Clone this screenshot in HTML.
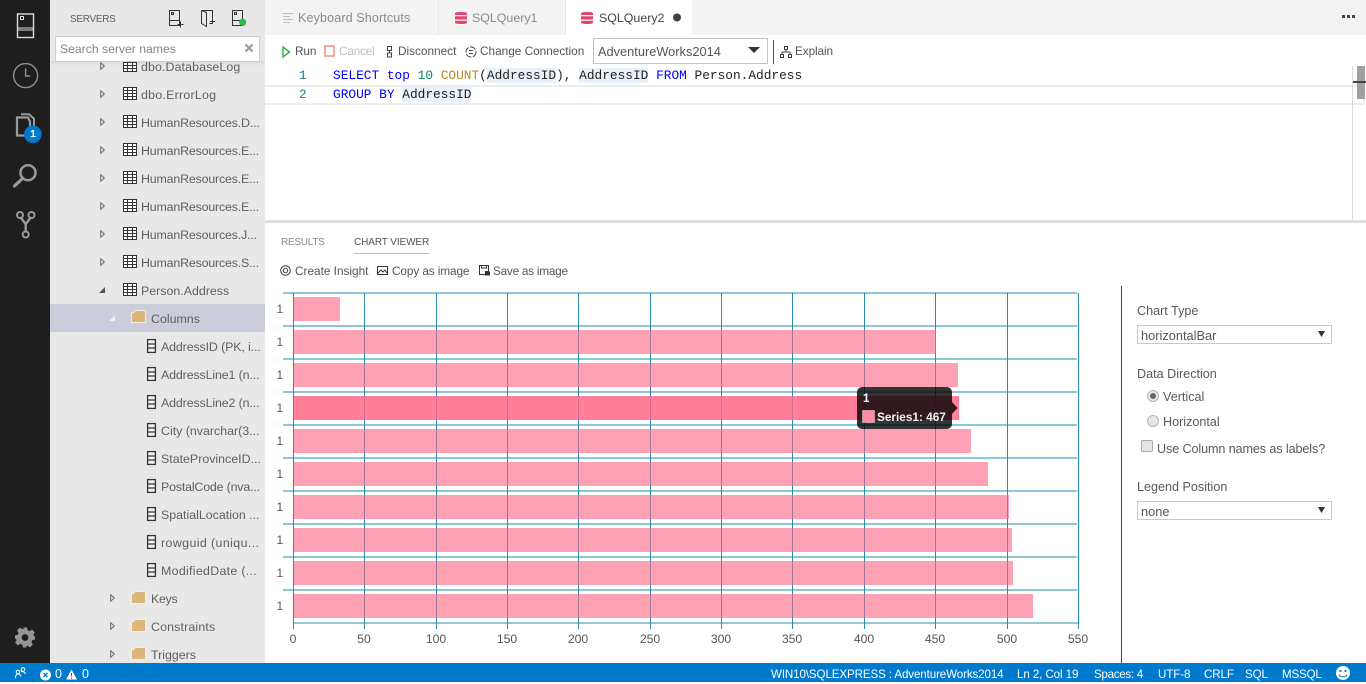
<!DOCTYPE html>
<html lang="en"><head><meta charset="utf-8"><title>SQL Operations Studio</title>
<style>
*{box-sizing:border-box}
html,body{margin:0;padding:0;width:1366px;height:682px;overflow:hidden;background:#fff;font-family:"Liberation Sans",sans-serif;font-size:12px;color:#616161}
.a{position:absolute;white-space:nowrap}
svg{position:absolute;overflow:visible}
#act{left:0;top:0;width:50px;height:663px;background:#1e1e1e}
#side{left:50px;top:0;width:215px;height:663px;background:#e8e8e8;overflow:hidden}
.row{position:absolute;left:0;width:215px;height:28px;line-height:28px;font-size:12.4px;color:#5f5f5f;white-space:nowrap}
.row span{position:absolute;top:1px}
.row svg{top:0;left:0}
.hr span{letter-spacing:-.17px}
#tabs{left:265px;top:0;width:1101px;height:35px;background:#f3f3f3}
.tb{position:absolute;top:1px;height:35px;line-height:35px;font-size:12.4px;white-space:nowrap}
.code{font-family:"Liberation Mono",monospace;font-size:12.82px;line-height:19px;height:19px;color:#222;white-space:pre}
.k{color:#0000ff}.hl{background:#e9f2fb}
.lb{font-size:12.6px;color:#5a5a5a}
.xt{position:absolute;top:632px;width:40px;text-align:center;font-size:12.2px;color:#555}
.yt{position:absolute;left:276.500px;font-size:12px;color:#555}
.sel{position:absolute;left:1137px;width:195px;height:19px;border:1px solid #c8c8c8;background:#fff;font-size:12.8px;line-height:19px;padding-left:3px;color:#555}
.st{position:absolute;top:665px;height:19px;line-height:19px;font-size:11.6px;color:#fff;white-space:nowrap}
.tool{position:absolute;top:38px;line-height:27px;font-size:11.8px;color:#555;white-space:nowrap}
.act{position:absolute;top:264px;line-height:14px;font-size:11.8px;color:#555;white-space:nowrap}
</style></head><body>

<svg width="0" height="0" style="position:absolute"><defs>
<symbol id="tbl" viewBox="0 0 14 13" overflow="visible"><rect x=".5" y=".5" width="13" height="12" fill="#fff" stroke="#333"/><path d="M0 3.500h14M0 6.500h14M0 9.500h14M4.500 1v12M9.500 1v12" stroke="#333" stroke-width="1" fill="none"/></symbol>
<symbol id="col" viewBox="0 0 9 14" overflow="visible"><rect x=".6" y=".6" width="7.800" height="12.800" fill="#f3f3f3" stroke="#333" stroke-width="1.300"/><path d="M1 5h7M1 9h7" stroke="#333" stroke-width="1.200" fill="none"/></symbol>
<symbol id="fold" viewBox="0 0 15 13" overflow="visible"><path d="M0 2.300h2.300L3.600 0H15v13H0z" fill="#f3efe6"/><path d="M1 3.200h1.800L4.100 1H14v11H1z" fill="#dcb67a"/></symbol>
<symbol id="arr" viewBox="0 0 5 8" overflow="visible"><path d="M.7 .7L4.300 4 .7 7.300z" fill="#e8e8e8" stroke="#6a6a6a" stroke-width="1"/></symbol>
<symbol id="db" viewBox="0 0 12 12" overflow="visible"><path d="M0 1.500C0 .4 2 0 6 0s6 .4 6 1.500v1.600H0zM0 4.300h12v3.200H0zM0 8.700h12v1.800C12 11.600 10 12 6 12s-6-.4-6-1.500z" fill="#e0476f"/></symbol>
</defs></svg>

<div id="act" class="a">
<svg width="50" height="663" style="left:0;top:0" fill="none">
<rect x="17.500" y="14" width="16" height="23.500" stroke="#dcdcdc" stroke-width="1.400"/>
<path d="M18 28h15M18 30h15" stroke="#dcdcdc" stroke-width="1"/>
<rect x="20.500" y="16.500" width="3" height="3" stroke="#dcdcdc"/>
<circle cx="25.600" cy="75.600" r="12" stroke="#8f8f8f" stroke-width="1.400"/>
<path d="M25.600 68.500v7.500h4.500" stroke="#8f8f8f" stroke-width="1.400"/>
<path d="M28 117.500h-11v18h13v-14z" stroke="#9a9a9a" stroke-width="2.200"/>
<path d="M21 114.200h8l5 4.500v8" stroke="#9a9a9a" stroke-width="2"/>
<circle cx="32.800" cy="134.300" r="8.800" fill="#007acc"/>
<circle cx="28" cy="172.700" r="7.500" stroke="#9a9a9a" stroke-width="2.500"/>
<path d="M22 179L14.500 186" stroke="#9a9a9a" stroke-width="3.200" stroke-linecap="round"/>
<circle cx="20" cy="215" r="3" stroke="#9a9a9a" stroke-width="2"/>
<circle cx="31.500" cy="215" r="3" stroke="#9a9a9a" stroke-width="2"/>
<circle cx="25.700" cy="234.500" r="3" stroke="#9a9a9a" stroke-width="2"/>
<path d="M21 218l4.700 6 4.700-6M25.700 224v7.500" stroke="#9a9a9a" stroke-width="2.400"/>
<g transform="translate(25,637.500)" fill="#959595">
<path d="M-2-10h4l.6 2.700 2.100.9 2.400-1.500 2.800 2.800-1.500 2.400.9 2.100L10-2v4l-2.700.6-.9 2.100 1.500 2.400-2.800 2.800-2.400-1.500-2.100.9L2 10h-4l-.6-2.700-2.100-.9-2.400 1.500-2.800-2.800 1.500-2.400-.9-2.100L-10 2v-4l2.700-.6.9-2.100-1.500-2.400 2.800-2.800 2.400 1.500 2.100-.9z"/>
<circle r="3.400" fill="#1e1e1e"/>
</g>
</svg>
<div class="a" style="left:24px;top:128px;width:18px;text-align:center;color:#fff;font-size:10.500px;font-weight:bold;line-height:13px">1</div>
</div>

<div id="side" class="a">
<div class="row" style="top:52px"><svg width="215" height="28"><use href="#arr" x="50" y="10" width="5" height="8"/><use href="#tbl" x="73" y="7" width="14" height="13"/></svg><span style="left:91px;letter-spacing:.1px">dbo.DatabaseLog</span></div>
<div class="row" style="top:80px"><svg width="215" height="28"><use href="#arr" x="50" y="10" width="5" height="8"/><use href="#tbl" x="73" y="7" width="14" height="13"/></svg><span style="left:91px;letter-spacing:.25px">dbo.ErrorLog</span></div>
<div class="row hr" style="top:108px"><svg width="215" height="28"><use href="#arr" x="50" y="10" width="5" height="8"/><use href="#tbl" x="73" y="7" width="14" height="13"/></svg><span style="left:91px">HumanResources.D...</span></div>
<div class="row hr" style="top:136px"><svg width="215" height="28"><use href="#arr" x="50" y="10" width="5" height="8"/><use href="#tbl" x="73" y="7" width="14" height="13"/></svg><span style="left:91px">HumanResources.E...</span></div>
<div class="row hr" style="top:164px"><svg width="215" height="28"><use href="#arr" x="50" y="10" width="5" height="8"/><use href="#tbl" x="73" y="7" width="14" height="13"/></svg><span style="left:91px">HumanResources.E...</span></div>
<div class="row hr" style="top:192px"><svg width="215" height="28"><use href="#arr" x="50" y="10" width="5" height="8"/><use href="#tbl" x="73" y="7" width="14" height="13"/></svg><span style="left:91px">HumanResources.E...</span></div>
<div class="row hr" style="top:220px"><svg width="215" height="28"><use href="#arr" x="50" y="10" width="5" height="8"/><use href="#tbl" x="73" y="7" width="14" height="13"/></svg><span style="left:91px">HumanResources.J...</span></div>
<div class="row hr" style="top:248px"><svg width="215" height="28"><use href="#arr" x="50" y="10" width="5" height="8"/><use href="#tbl" x="73" y="7" width="14" height="13"/></svg><span style="left:91px">HumanResources.S...</span></div>
<div class="row" style="top:276px"><svg width="215" height="28"><path d="M55 11v6h-6z" fill="#555"/><use href="#tbl" x="73" y="7" width="14" height="13"/></svg><span style="left:91px">Person.Address</span></div>
<div class="row" style="top:304px;background:#cbcdda"><svg width="215" height="28"><path d="M65 11v6h-6z" fill="#f0f0f0"/><use href="#fold" x="81" y="6" width="15" height="13"/></svg><span style="left:101px">Columns</span></div>
<div class="row hr" style="top:332px"><svg width="215" height="28"><use href="#col" x="97" y="7" width="9" height="14"/></svg><span style="left:111px;letter-spacing:-.12px">AddressID (PK, i...</span></div>
<div class="row hr" style="top:360px"><svg width="215" height="28"><use href="#col" x="97" y="7" width="9" height="14"/></svg><span style="left:111px;letter-spacing:-.12px">AddressLine1 (n...</span></div>
<div class="row hr" style="top:388px"><svg width="215" height="28"><use href="#col" x="97" y="7" width="9" height="14"/></svg><span style="left:111px;letter-spacing:-.12px">AddressLine2 (n...</span></div>
<div class="row" style="top:416px"><svg width="215" height="28"><use href="#col" x="97" y="7" width="9" height="14"/></svg><span style="left:111px">City (nvarchar(3...</span></div>
<div class="row" style="top:444px"><svg width="215" height="28"><use href="#col" x="97" y="7" width="9" height="14"/></svg><span style="left:111px">StateProvinceID...</span></div>
<div class="row hr" style="top:472px"><svg width="215" height="28"><use href="#col" x="97" y="7" width="9" height="14"/></svg><span style="left:111px">PostalCode (nva...</span></div>
<div class="row" style="top:500px"><svg width="215" height="28"><use href="#col" x="97" y="7" width="9" height="14"/></svg><span style="left:111px">SpatialLocation ...</span></div>
<div class="row" style="top:528px"><svg width="215" height="28"><use href="#col" x="97" y="7" width="9" height="14"/></svg><span style="left:111px;letter-spacing:.4px">rowguid (uniqu...</span></div>
<div class="row" style="top:556px"><svg width="215" height="28"><use href="#col" x="97" y="7" width="9" height="14"/></svg><span style="left:111px;letter-spacing:.3px">ModifiedDate (...</span></div>
<div class="row" style="top:584px"><svg width="215" height="28"><use href="#arr" x="60" y="10" width="5" height="8"/><use href="#fold" x="81" y="7" width="15" height="13"/></svg><span style="left:101px;letter-spacing:-.3px">Keys</span></div>
<div class="row" style="top:612px"><svg width="215" height="28"><use href="#arr" x="60" y="10" width="5" height="8"/><use href="#fold" x="81" y="7" width="15" height="13"/></svg><span style="left:101px;letter-spacing:.15px">Constraints</span></div>
<div class="row" style="top:640px"><svg width="215" height="28"><use href="#arr" x="60" y="10" width="5" height="8"/><use href="#fold" x="81" y="7" width="15" height="13"/></svg><span style="left:101px">Triggers</span></div>

<div class="a" style="left:0;top:0;width:215px;height:61px;background:#e8e8e8;box-shadow:0 2px 4px rgba(0,0,0,.08)"></div>
<div class="a" style="left:20px;top:12.500px;font-size:10px;letter-spacing:-.3px;line-height:14px;color:#616161">SERVERS</div>
<svg width="215" height="61" style="left:0;top:0" fill="none" stroke="#333" stroke-width="1">
<path d="M119.500 10.500h10v15h-10zM119.500 20.500h10"/><path d="M127.500 24.500h6M130.500 21.500v6"/><rect x="121.500" y="12.500" width="2" height="2"/>
<path d="M151.500 10.500h11v13h-3M151.500 10.500v13l5 3v-14l-5-2"/><path d="M160 21.500h5M162.500 19v5"/>
<path d="M182.500 10.500h10v15h-10zM182.500 20.500h10"/><rect x="184.500" y="12.500" width="2" height="2"/>
<circle cx="192.700" cy="22.300" r="3.600" fill="#2db84d" stroke="none"/>
</svg>
<div class="a" style="left:5px;top:36px;width:205px;height:26px;background:#fff;border:1px solid #cfcfcf;line-height:25px;padding-left:4px;font-size:12.200px;color:#858585">Search server names</div>
<svg width="12" height="12" style="left:194px;top:43px" fill="none" stroke="#9a9a9a" stroke-width="2"><path d="M1.500 1.500l7 7M8.500 1.500l-7 7"/></svg>
</div>

<div id="tabs" class="a"></div>
<div class="a" style="left:265px;top:0;width:174px;height:35px;border-right:1px solid #e8e8e8"></div>
<div class="a" style="left:439px;top:0;width:127px;height:35px;border-right:1px solid #e8e8e8"></div>
<div class="a" style="left:566px;top:0;width:126px;height:35px;background:#fff"></div>
<svg width="12" height="12" style="left:282px;top:13px" fill="none" stroke="#bdbdbd"><path d="M1 .5h10M1 3.500h7M1 6.500h10M1 9.500h7"/></svg>
<div class="tb" style="left:298px;color:#8b8b8b;font-size:12.600px;letter-spacing:.1px">Keyboard Shortcuts</div>
<svg width="12" height="12" style="left:455px;top:12px"><use href="#db" width="12" height="12"/></svg>
<div class="tb" style="left:472px;color:#8b8b8b">SQLQuery1</div>
<svg width="12" height="12" style="left:581px;top:12px"><use href="#db" width="12" height="12"/></svg>
<div class="tb" style="left:599px;color:#444">SQLQuery2</div>
<svg width="10" height="10" style="left:672px;top:12.500px"><circle cx="5" cy="4.500" r="4" fill="#424242"/></svg>
<svg width="16" height="4" style="left:1342px;top:15px" fill="#424242"><rect x="0" y="0" width="3" height="3"/><rect x="5" y="0" width="3" height="3"/><rect x="10" y="0" width="3" height="3"/></svg>

<svg width="9" height="12" style="left:282px;top:46px" fill="none"><path d="M1 1l6.500 5L1 11z" stroke="#3fae53" stroke-width="1.500"/></svg>
<div class="tool" style="left:295px;letter-spacing:-.1px">Run</div>
<div class="a" style="left:324px;top:45px;width:11px;height:12px;border:2px solid #f2ad9c;background:#fff"></div>
<div class="tool" style="left:339px;color:#bdbdbd;letter-spacing:-.2px">Cancel</div>
<svg width="9" height="14" style="left:385px;top:45px" fill="none" stroke="#424242"><path d="M2.500 1.500h4v4h-4zM2.500 8h4v4h-4zM4.500 5.500v3"/></svg>
<div class="tool" style="left:398px">Disconnect</div>
<svg width="12" height="12" style="left:465px;top:46px" fill="none" stroke="#424242"><circle cx="6" cy="6" r="5" stroke-dasharray="6 1.500"/><path d="M4 4.500h4M4 7.500h4"/></svg>
<div class="tool" style="left:480px">Change Connection</div>
<div class="a" style="left:593px;top:38px;width:175px;height:26px;border:1px solid #c4c4c4;line-height:25px;padding-left:4px;font-size:12.800px;color:#555">AdventureWorks2014</div>
<svg width="12" height="8" style="left:748px;top:47px"><path d="M0 0h12L6 6z" fill="#333"/></svg>
<div class="a" style="left:773px;top:40px;width:1px;height:24px;background:#555"></div>
<svg width="12" height="12" style="left:780px;top:46px" fill="none" stroke="#424242"><path d="M4.500 .5h3v3h-3zM.5 8.500h3v3h-3zM8.500 8.500h3v3h-3zM6 3.500v2.500M2 8.500V6h8v2.500"/></svg>
<div class="tool" style="left:795px;letter-spacing:-.1px">Explain</div>

<div class="a" style="left:265px;top:85px;width:1100px;height:20px;border:2px solid #eee;border-left:0"></div>
<div class="a code" style="left:299px;top:66px;color:#237893">1</div>
<div class="a code" style="left:299px;top:85px;color:#237893">2</div>
<div class="a code" style="left:333px;top:66px"><span class="k">SELECT</span> <span class="k">top</span> <span style="color:#09885a">10</span> <span style="color:#b5891f">COUNT</span>(<span class="hl">AddressID</span>), <span class="hl">AddressID</span> <span class="k">FROM</span> Person.Address</div>
<div class="a code" style="left:333px;top:85px"><span class="k">GROUP</span> <span class="k">BY</span> <span class="hl">AddressID</span></div>
<div class="a" style="left:1352px;top:66px;width:1px;height:154px;background:#dcdcdc"></div>
<div class="a" style="left:1357px;top:66px;width:8px;height:33px;background:#a0a0a0"></div>
<div class="a" style="left:1353px;top:81px;width:13px;height:2px;background:#444"></div>

<div class="a" style="left:265px;top:220px;width:1101px;height:3px;background:#dedede"></div>

<div class="a" style="left:281px;top:236px;font-size:10px;letter-spacing:-.25px;line-height:13px;color:#8a8a8a">RESULTS</div>
<div class="a" style="left:354px;top:236px;font-size:10px;letter-spacing:-.1px;line-height:13px;color:#555">CHART VIEWER</div>
<div class="a" style="left:354px;top:253px;width:75px;height:1px;background:#bbb"></div>

<svg width="11" height="11" style="left:280px;top:265px" fill="none" stroke="#424242"><circle cx="5.500" cy="5.500" r="4.800"/><circle cx="5.500" cy="5.500" r="2.200"/></svg>
<div class="act" style="left:295px">Create Insight</div>
<svg width="12" height="10" style="left:377px;top:266px" fill="none" stroke="#333"><rect x=".5" y=".5" width="10" height="8"/><path d="M1 7l3-3 2 2 2-2 2 3"/></svg>
<div class="act" style="left:392px;letter-spacing:-.1px">Copy as image</div>
<svg width="11" height="11" style="left:479px;top:265px" fill="none" stroke="#333"><path d="M.5 .5h9v6h-3v3h-6z"/><path d="M2.500 .5v2.500h5V.5"/><rect x="6.500" y="7" width="4" height="3" fill="#333"/></svg>
<div class="act" style="left:493px;letter-spacing:-.25px">Save as image</div>

<svg width="1366" height="682" style="left:0;top:0">
<g fill="#8fc6d6">
<rect x="283" y="292" width="794" height="2"/><rect x="283" y="325" width="794" height="2"/><rect x="283" y="358" width="794" height="2"/><rect x="283" y="391" width="794" height="2"/><rect x="283" y="424" width="794" height="2"/><rect x="283" y="457" width="794" height="2"/><rect x="283" y="490" width="794" height="2"/><rect x="283" y="523" width="794" height="2"/><rect x="283" y="556" width="794" height="2"/><rect x="283" y="589" width="794" height="2"/>
</g>
<rect x="293" y="622.500" width="786" height="1" fill="#2a8db0"/>
<g fill="#2a8db0">
<rect x="293" y="293" width="1" height="336"/><rect x="364" y="293" width="1" height="336"/><rect x="436" y="293" width="1" height="336"/><rect x="507" y="293" width="1" height="336"/><rect x="578" y="293" width="1" height="336"/><rect x="650" y="293" width="1" height="336"/><rect x="721" y="293" width="1" height="336"/><rect x="792" y="293" width="1" height="336"/><rect x="864" y="293" width="1" height="336"/><rect x="935" y="293" width="1" height="336"/><rect x="1007" y="293" width="1" height="336"/><rect x="1078" y="293" width="1" height="336"/>
</g>
<g fill="#ff6384" fill-opacity=".6">
<rect x="294" y="297" width="46" height="24"/><rect x="294" y="330" width="642" height="24"/><rect x="294" y="363" width="664" height="24"/><rect x="294" y="429" width="677" height="24"/><rect x="294" y="462" width="694" height="24"/><rect x="294" y="495" width="715" height="24"/><rect x="294" y="528" width="718" height="24"/><rect x="294" y="561" width="719" height="24"/><rect x="294" y="594" width="739" height="24"/>
</g>
<rect x="294" y="396" width="665" height="24" fill="#ff6384" fill-opacity=".82"/>
<rect x="857" y="387" width="95" height="42" rx="5" fill="#000" fill-opacity=".8"/>
<path d="M952 402l5.500 6-5.500 6z" fill="#000" fill-opacity=".8"/>
<rect x="862.500" y="410.500" width="12" height="12" fill="#ff8aa2" stroke="#fff" stroke-opacity=".4"/>
</svg>
<div class="a" style="left:863px;top:393px;font-size:11.500px;line-height:13px;font-weight:bold;color:#fff">1</div>
<div class="a" style="left:877px;top:411px;font-size:11.800px;line-height:13px;font-weight:bold;color:#f2f2f2">Series1: 467</div>

<div class="yt" style="top:302px">1</div><div class="yt" style="top:335px">1</div><div class="yt" style="top:368px">1</div><div class="yt" style="top:401px">1</div><div class="yt" style="top:434px">1</div><div class="yt" style="top:467px">1</div><div class="yt" style="top:500px">1</div><div class="yt" style="top:533px">1</div><div class="yt" style="top:566px">1</div><div class="yt" style="top:599px">1</div>
<div class="xt" style="left:273px">0</div><div class="xt" style="left:344px">50</div><div class="xt" style="left:416px">100</div><div class="xt" style="left:487px">150</div><div class="xt" style="left:558px">200</div><div class="xt" style="left:630px">250</div><div class="xt" style="left:701px">300</div><div class="xt" style="left:772px">350</div><div class="xt" style="left:844px">400</div><div class="xt" style="left:915px">450</div><div class="xt" style="left:987px">500</div><div class="xt" style="left:1058px">550</div>

<div class="a" style="left:1121px;top:286px;width:1px;height:377px;background:#444"></div>
<div class="a lb" style="left:1137px;top:303.500px">Chart Type</div>
<div class="sel" style="top:325px">horizontalBar</div>
<svg width="8" height="7" style="left:1318px;top:331px"><path d="M0 0h7L3.500 6z" fill="#333"/></svg>
<div class="a lb" style="left:1137px;top:366.500px">Data Direction</div>
<svg width="14" height="14" style="left:1146px;top:389px"><circle cx="7" cy="7" r="5.500" fill="#e6e6e6" stroke="#b5b5b5"/><circle cx="7" cy="7" r="3" fill="#666"/></svg>
<div class="a lb" style="left:1163px;top:389.500px">Vertical</div>
<svg width="14" height="14" style="left:1146px;top:414px"><circle cx="7" cy="7" r="5.500" fill="#e6e6e6" stroke="#b5b5b5"/></svg>
<div class="a lb" style="left:1163px;top:414.500px">Horizontal</div>
<div class="a" style="left:1141px;top:440px;width:12px;height:12px;background:#e6e6e6;border:1px solid #aaa;border-radius:2px"></div>
<div class="a lb" style="left:1157px;top:441.500px;letter-spacing:-.1px">Use Column names as labels?</div>
<div class="a lb" style="left:1137px;top:479.500px">Legend Position</div>
<div class="sel" style="top:501px">none</div>
<svg width="8" height="7" style="left:1318px;top:507px"><path d="M0 0h7L3.500 6z" fill="#333"/></svg>

<div class="a" style="left:0;top:663px;width:1366px;height:19px;background:#007acc"></div>
<svg width="90" height="19" style="left:0;top:664px" fill="none" stroke="#fff">
<circle cx="23" cy="5.500" r="1.800"/><circle cx="18" cy="8" r="1.800"/><path d="M15.500 14c0-3 1-4 2.500-4s2.500 1 3 2.500M21 7.500c2 0 4 .5 4.500 2.500"/>
<circle cx="45.500" cy="11" r="5.500" fill="#fff" stroke="none"/><path d="M43.500 9l4 4M47.500 9l-4 4" stroke="#007acc" stroke-width="1.400"/>
<path d="M71.500 5.500l5.500 10H66z" fill="#fff" stroke="none"/><path d="M71.500 9v3.500M71.500 13.500v1.200" stroke="#007acc"/>
</svg>
<div class="st" style="left:55px;font-size:12.500px">0</div><div class="st" style="left:82px;font-size:12.500px">0</div>
<div class="st" style="left:771px;letter-spacing:-.12px">WIN10\SQLEXPRESS : AdventureWorks2014</div>
<div class="st" style="left:1017px;letter-spacing:-.1px">Ln 2, Col 19</div>
<div class="st" style="left:1094px;letter-spacing:-.3px">Spaces: 4</div>
<div class="st" style="left:1158px;letter-spacing:-.1px">UTF-8</div>
<div class="st" style="left:1204px;letter-spacing:-.1px">CRLF</div>
<div class="st" style="left:1245px;letter-spacing:-.1px">SQL</div>
<div class="st" style="left:1282px;letter-spacing:-.2px">MSSQL</div>
<svg width="16" height="16" style="left:1335px;top:665px"><circle cx="8" cy="8" r="7" fill="#fff"/><circle cx="5.500" cy="6" r="1.100" fill="#007acc"/><circle cx="10.500" cy="6" r="1.100" fill="#007acc"/><path d="M4 9.500c1 3 7 3 8 0" stroke="#007acc" fill="none"/></svg>
</body></html>
